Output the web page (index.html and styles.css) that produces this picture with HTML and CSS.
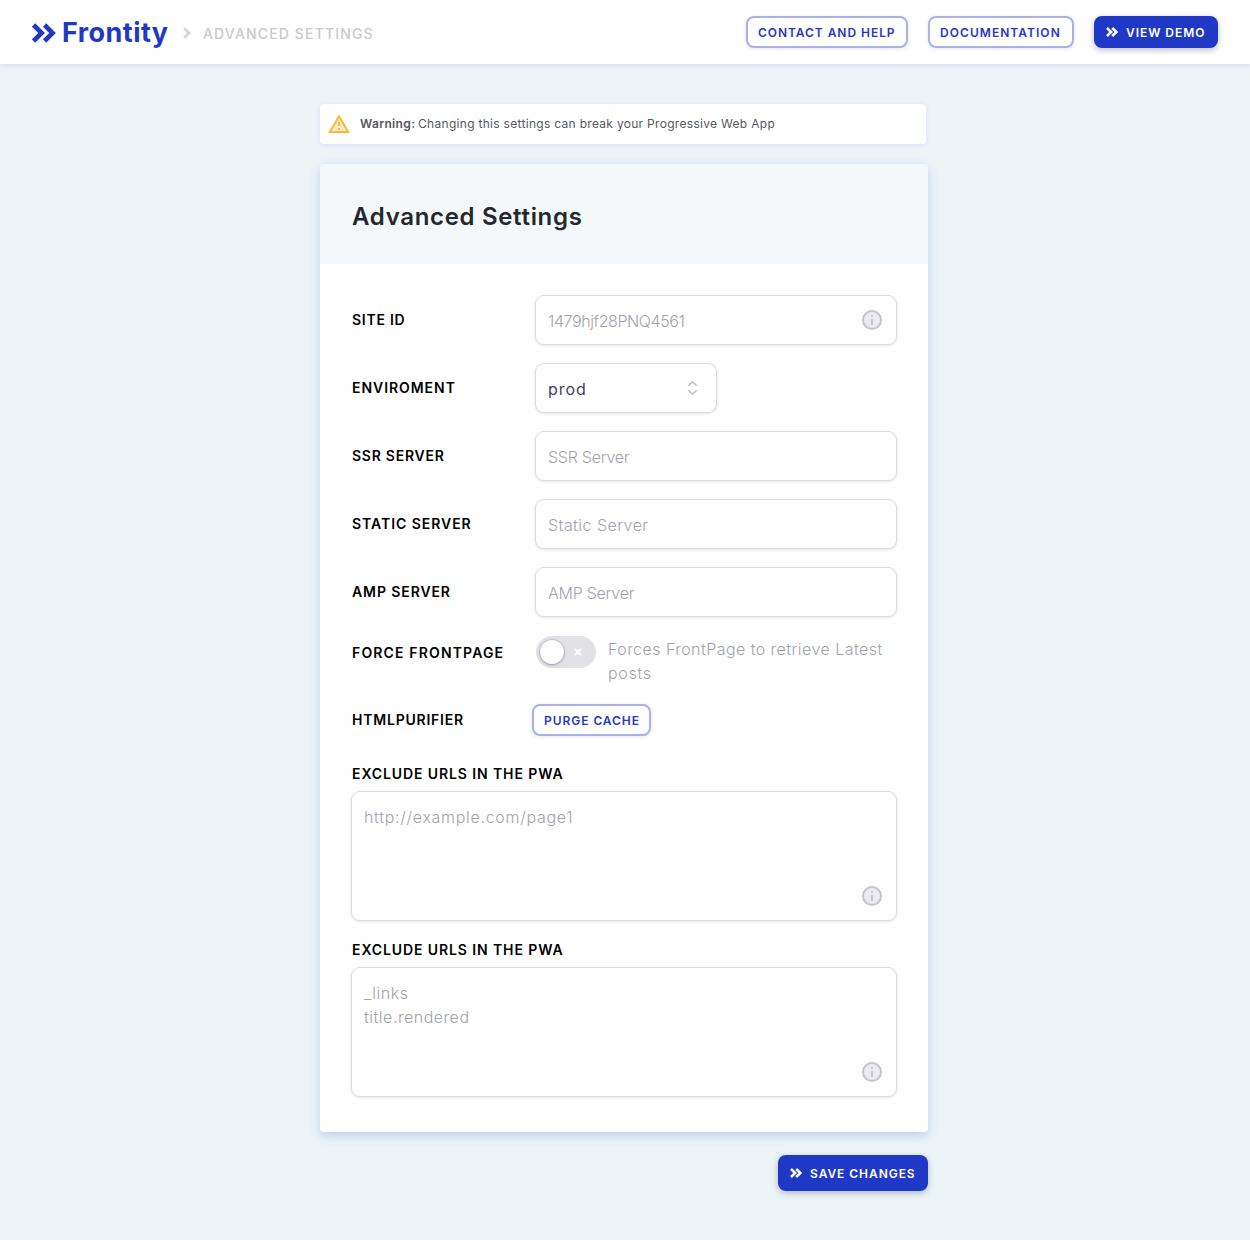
FILE: index.html
```html
<!DOCTYPE html>
<html lang="en">
<head>
<meta charset="utf-8">
<title>Frontity - Advanced Settings</title>
<link rel="stylesheet" href="styles.css">
</head>
<body>
<svg class="defs" width="0" height="0" aria-hidden="true">
  <symbol id="info" viewBox="0 0 20 20">
    <circle cx="10" cy="10" r="9" fill="#ebebee" stroke="#c3c3ca" stroke-width="2"/>
    <path d="M9 5h2v2H9zM9 9h2v6H9z" fill="#c3c3ca"/>
  </symbol>
  <symbol id="double" viewBox="0 0 12 10">
    <path d="M1 1l4.200 4L1 9M6.200 1l4.200 4-4.200 4" fill="none" stroke="#fff" stroke-width="2.500"/>
  </symbol>
</svg>
<header class="topbar">
  <div class="brand">
    <svg class="logo" width="24" height="20" viewBox="0 0 24 20"><path d="M1.600 2l8 8-8 8M12.600 2l8 8-8 8" fill="none" stroke="#1f38c5" stroke-width="4.600"/></svg>
    <span class="brand-name">Frontity</span>
    <svg class="crumb-arrow" width="8" height="12" viewBox="0 0 8 12"><path d="M1.200 1.200L6 6l-4.800 4.800" fill="none" stroke="#d3d3d8" stroke-width="2.900"/></svg>
    <span class="crumb">ADVANCED SETTINGS</span>
  </div>
  <nav class="actions">
    <a class="btn outline contact">CONTACT AND HELP</a>
    <a class="btn outline docs">DOCUMENTATION</a>
    <a class="btn solid demo"><svg width="12" height="10"><use href="#double"/></svg><span>VIEW DEMO</span></a>
  </nav>
</header>
<main class="page">
  <div class="warning">
    <svg width="22" height="20" viewBox="0 0 22 20"><path d="M11 2.200L20.200 18H1.800z" fill="#fcebc8" stroke="#f7bc33" stroke-width="2"/><path d="M10 8h2v4h-2zM10 14h2v2h-2z" fill="#f7bc33"/></svg>
    <p><b>Warning:</b> <span>Changing this settings can break your Progressive Web App</span></p>
  </div>
  <section class="card">
    <div class="card-head"><h1>Advanced Settings</h1></div>
    <form class="card-body">
      <div class="row"><label class="label site">SITE ID</label><div class="field"><span class="hint id">1479hjf28PNQ4561</span><svg width="20" height="20"><use href="#info"/></svg></div></div>
      <div class="row"><label class="label">ENVIROMENT</label><div class="field select"><span class="value">prod</span><svg class="sort" width="11" height="14" viewBox="0 0 11 14"><path d="M1.200 4.800L5.500.9l4.300 3.900M1.200 9.200l4.300 3.900 4.300-3.900" fill="none" stroke="#bfbfc7" stroke-width="1.500"/></svg></div></div>
      <div class="row"><label class="label ssr">SSR SERVER</label><div class="field"><span class="hint tight">SSR Server</span></div></div>
      <div class="row"><label class="label">STATIC SERVER</label><div class="field"><span class="hint">Static Server</span></div></div>
      <div class="row"><label class="label amp">AMP SERVER</label><div class="field"><span class="hint tight">AMP Server</span></div></div>
      <div class="row toggle-row"><label class="label force">FORCE FRONTPAGE</label>
        <div class="toggle"><i class="knob"></i><svg width="8" height="8" viewBox="0 0 8 8"><path d="M1 1l6 6M7 1L1 7" stroke="#fff" stroke-width="2.200"/></svg></div>
        <p class="toggle-text">Forces FrontPage to retrieve Latest <span class="last">posts</span></p></div>
      <div class="row purge-row"><label class="label purifier">HTMLPURIFIER</label><a class="btn outline purge">PURGE CACHE</a></div>
      <div class="block"><label class="label urls">EXCLUDE URLS IN THE PWA</label><div class="area"><span class="hint url">http://example.com/page1</span><svg width="20" height="20"><use href="#info"/></svg></div></div>
      <div class="block"><label class="label urls">EXCLUDE URLS IN THE PWA</label><div class="area"><span class="hint links">_links<br>title.rendered</span><svg width="20" height="20"><use href="#info"/></svg></div></div>
    </form>
  </section>
  <a class="btn solid save"><svg width="12" height="10"><use href="#double"/></svg><span>SAVE CHANGES</span></a>
</main>
</body>
</html>
```
FILE: styles.css
```css
* { box-sizing: border-box; }
body { margin: 0; min-height: 1240px; background: #ecf4f8; font-family: "Inter", sans-serif; color: #24282e; }
svg { display: block; flex: none; }
.defs { position: absolute; }
p, h1 { margin: 0; }

.topbar { height: 64px; padding: 0 32px; display: flex; align-items: center; justify-content: space-between; background: #fff; box-shadow: 0 1px 4px rgba(31, 56, 197, .12); }
.brand { display: flex; align-items: center; white-space: nowrap; }
.logo { margin-top: 1px; }
.brand-name { margin: 1px 0 0 6px; width: 121px; font-size: 27px; line-height: 32px; font-weight: 750; letter-spacing: .45px; color: #1f38c5; }
.crumb-arrow { margin-top: 2px; }
.crumb { margin: 2px 0 0 12px; font-size: 14px; font-weight: 500; letter-spacing: 1.15px; color: #cacaca; }
.actions { display: flex; gap: 20px; }

.btn { display: flex; align-items: center; height: 32px; border-radius: 8px; font-size: 12px; font-weight: 600; letter-spacing: .95px; white-space: nowrap; }
.outline { padding-left: 10px; border: 2px solid #a9b0ea; color: #1f38c5; background: #fff; box-shadow: 0 1px 4px rgba(31, 56, 197, .12); }
.solid { padding-left: 12px; gap: 8px; color: #fff; background: #1f38c5; box-shadow: 0 2px 6px rgba(12, 17, 43, .28); }
.contact { width: 162px; }
.docs { width: 146px; letter-spacing: 1.05px; }
.demo { width: 124px; }
.purge { width: 119px; margin-left: -4px; }
.save { width: 150px; height: 36px; margin: 23px 0 0 auto; }

.page { width: 608px; margin-left: 320px; padding-top: 40px; }
.warning { width: 606px; height: 40px; padding-left: 8px; display: flex; align-items: center; gap: 10px; border-radius: 4px; background: #fff; box-shadow: 0 1px 4px rgba(31, 56, 197, .1); font-size: 12px; color: #55575c; white-space: nowrap; }
.warning p { margin-top: -2px; letter-spacing: .3px; }
.warning b { font-weight: 600; letter-spacing: .35px; margin-right: -1px; }

.card { margin-top: 20px; height: 968px; border-radius: 4px; background: #fff; overflow: hidden; box-shadow: 0 4px 12px rgba(31, 56, 197, .2); }
.card-head { height: 100px; padding: 6px 32px 0; display: flex; align-items: center; background: #f4f8fa; }
.card-head h1 { font-size: 24px; line-height: 32px; font-weight: 600; letter-spacing: .68px; }
.card-body { padding: 32px; }

.row { display: flex; align-items: center; height: 48px; margin-bottom: 20px; }
.label { width: 184px; flex: none; font-size: 14px; line-height: 20px; font-weight: 600; letter-spacing: .95px; color: #000; white-space: nowrap; }
.site, .ssr { letter-spacing: .75px; }
.amp { letter-spacing: .9px; }
.force { letter-spacing: 1.15px; }
.purifier { letter-spacing: .78px; }
.urls { display: block; letter-spacing: .9px; }

.field, .area { background: #fff; border-radius: 8px; box-shadow: 0 0 0 1px #dcdce0, 0 1px 3px 1px rgba(12, 17, 43, .12); }
.field { width: 360px; height: 48px; padding: 0 14px 0 12px; display: flex; align-items: center; justify-content: space-between; }
.select { width: 180px; padding-right: 18px; }
.hint, .toggle-text { font-size: 16px; line-height: 24px; font-weight: 350; letter-spacing: .45px; color: #a2a2ad; }
.field .hint, .value { padding-top: 1px; }
.field .id { letter-spacing: -.4px; }
.field .tight { letter-spacing: -.25px; }
.value { font-size: 16px; line-height: 24px; letter-spacing: .95px; color: #43435a; }

.toggle-row { align-items: flex-start; height: 48px; }
.toggle-row .label { margin-top: 7px; }
.toggle { width: 60px; height: 32px; padding: 0 14px 0 4px; display: flex; align-items: center; justify-content: space-between; border-radius: 16px; background: #e1e1e6; }
.knob { width: 24px; height: 24px; border-radius: 50%; background: #fff; box-shadow: 0 0 0 1px rgba(12, 17, 43, .1), 0 1px 3px rgba(12, 17, 43, .25); }
.toggle-text { width: 284px; margin: 1px 0 0 12px; }
.toggle-text .last { letter-spacing: .7px; }
.purge-row { height: 32px; margin-bottom: 28px; }

.block { margin-bottom: 20px; }
.area { height: 128px; margin-top: 8px; padding: 13px 14px 14px 12px; display: flex; justify-content: space-between; }
.area svg { align-self: flex-end; }
.area .url { letter-spacing: .7px; }
.area .links { letter-spacing: .52px; }
```
